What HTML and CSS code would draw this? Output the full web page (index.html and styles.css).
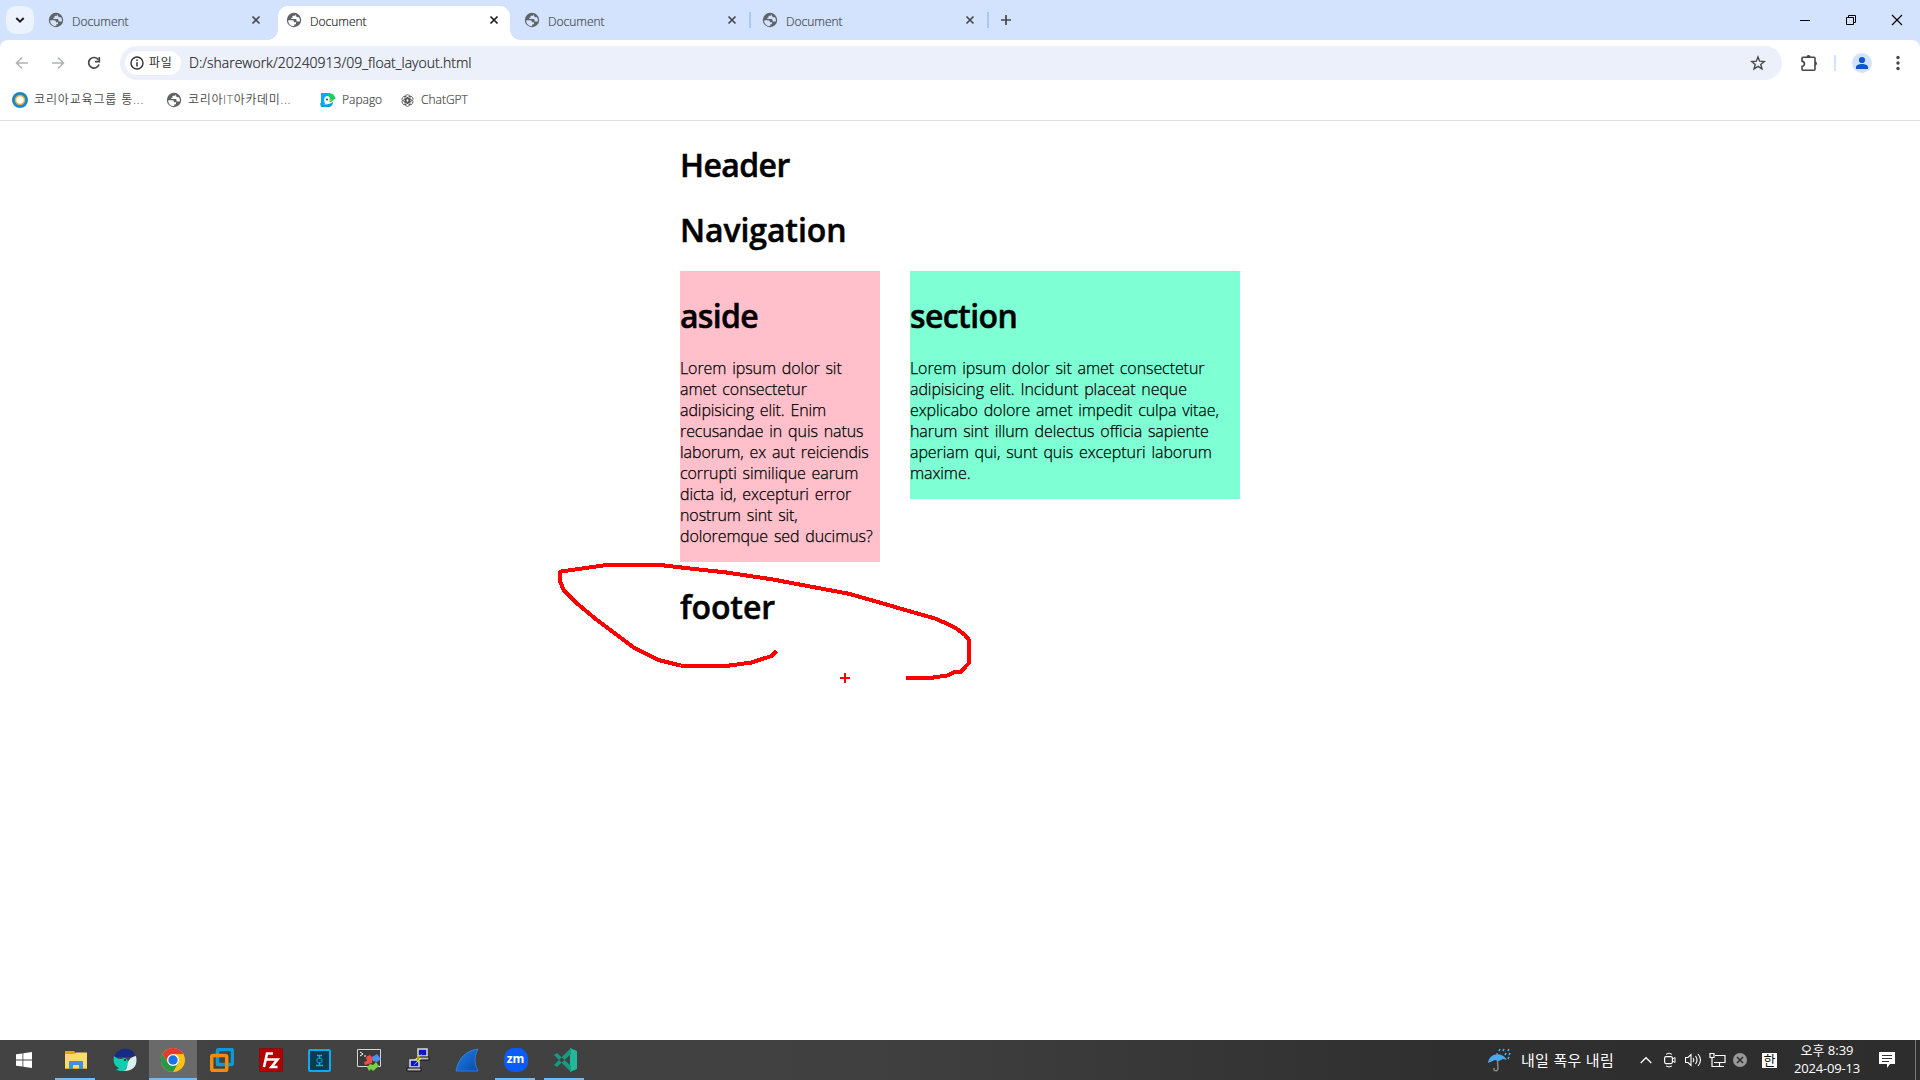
FILE: index.html
```
<!DOCTYPE html>
<html lang="ko">
<head>
<meta charset="utf-8">
<title>Document</title>
<link rel="stylesheet" href="styles.css">
</head>
<body>
<svg class="defs" aria-hidden="true">
  <symbol id="site" viewBox="0 0 16 16">
    <circle cx="8" cy="8" r="7.200" fill="#5f6368"/>
    <path d="M2.200 8.300h4.300q1.500.2 1.500 1.900h2v2H8.300v1.900C5 14.300 2 12 2.200 8.300z" fill="currentColor"/>
    <path d="M9.200 2.200v1.500H7.300q-.8 0-.8.800v1.300H5.300v1.300h4.200q1 0 1.100 1.300v1h2.200q.9.200 1.100-.5.200-2-.9-3.600h-1.500q-1.200 0-1.200-1.200z" fill="currentColor"/>
  </symbol>
  <symbol id="close" viewBox="0 0 10 10"><path d="M1.500 1.500l7 7m0-7l-7 7" stroke="currentColor" stroke-width="1.700" fill="none"/></symbol>
</svg>

<div class="screen">
  <div class="tabstrip">
    <button class="search"><svg width="10" height="8" viewBox="0 0 10 8"><path d="M1.300 2l3.700 3.600L8.700 2" fill="none" stroke="#1f1f1f" stroke-width="2"/></svg></button>
    <div class="tabs">
      <div class="tab"><svg class="fav"><use href="#site"/></svg><span>Document</span><svg class="x"><use href="#close"/></svg></div>
      <div class="tab active"><svg class="fav"><use href="#site"/></svg><span>Document</span><svg class="x"><use href="#close"/></svg></div>
      <div class="tab"><svg class="fav"><use href="#site"/></svg><span>Document</span><svg class="x"><use href="#close"/></svg><i class="sep"></i></div>
      <div class="tab"><svg class="fav"><use href="#site"/></svg><span>Document</span><svg class="x"><use href="#close"/></svg><i class="sep"></i></div>
    </div>
    <svg class="plus" width="12" height="12" viewBox="0 0 12 12"><path d="M6 1v10M1 6h10" stroke="#474747" stroke-width="1.700"/></svg>
    <div class="wincontrols">
      <svg width="46" height="40" viewBox="0 0 46 40"><path d="M18 20.500h10" stroke="#000"/></svg>
      <svg width="46" height="40" viewBox="0 0 46 40"><path d="M18.500 17.500h7v7h-7zM20.500 17.500v-2h7v7h-2" fill="none" stroke="#000"/></svg>
      <svg width="46" height="40" viewBox="0 0 46 40"><path d="M18 15l10 10m0-10L18 25" stroke="#000" stroke-width="1.200"/></svg>
    </div>
  </div>

  <div class="toolbar">
    <svg class="nav" width="14" height="14" viewBox="0 0 14 14"><path d="M13 7H2M7 1.500L1.500 7 7 12.500" fill="none" stroke="#b0b2b5" stroke-width="1.600"/></svg>
    <svg class="nav" width="14" height="14" viewBox="0 0 14 14"><path d="M1 7h11M7 1.500L12.500 7 7 12.500" fill="none" stroke="#b0b2b5" stroke-width="1.600"/></svg>
    <svg class="nav reload" width="14" height="14" viewBox="0 0 14 14"><path d="M11.300 3.700A5.300 5.300 0 1 0 12 8.500" fill="none" stroke="#474747" stroke-width="1.700"/><path d="M12.300 1v4.700H8" fill="none" stroke="#474747" stroke-width="1.700"/></svg>
    <div class="omnibox">
      <div class="chip"><svg width="14" height="14" viewBox="0 0 14 14"><circle cx="7" cy="7" r="6" fill="none" stroke="#303030" stroke-width="1.400"/><path d="M7 6.200v4.200M7 3.500v1.500" stroke="#303030" stroke-width="1.500"/></svg><span>파일</span></div>
      <span class="url">D:/sharework/20240913/09_float_layout.html</span>
      <svg class="star" width="16" height="16" viewBox="0 0 16 16"><path d="M8 1.900l1.700 4.300 4.600.3-3.500 2.900 1.200 4.500L8 11.400l-4 2.500 1.200-4.500L1.700 6.500l4.600-.3z" fill="none" stroke="#474747" stroke-width="1.400"/></svg>
    </div>
    <svg class="puzzle" width="18" height="18" viewBox="0 0 18 18"><path d="M2 4.200Q2 3.200 3 3.200h11q1 0 1 1v11q0 1-1 1H3q-1 0-1-1v-2.700c3.300-.7 3.300-4.700 0-5.400z" fill="none" stroke="#474747" stroke-width="1.600"/><path d="M6.500 3a2 2 0 0 1 4 0zM15 7.500a2 2 0 0 1 0 4z" fill="#474747"/></svg>
    <i class="divider"></i>
    <svg class="avatar" width="20" height="20" viewBox="0 0 20 20"><circle cx="10" cy="10" r="10" fill="#d3e3fd"/><circle cx="10" cy="7" r="3.100" fill="#0b57d0"/><path d="M4 16v-1.500c0-2.600 3-3.500 6-3.500s6 .9 6 3.500V16z" fill="#0b57d0"/></svg>
    <svg class="dots" width="4" height="16" viewBox="0 0 4 16"><g fill="#474747"><circle cx="2" cy="2.500" r="1.700"/><circle cx="2" cy="8" r="1.700"/><circle cx="2" cy="13.500" r="1.700"/></g></svg>
  </div>

  <div class="bookmarks">
    <div class="bm b1"><svg width="16" height="16" viewBox="0 0 16 16"><circle cx="8" cy="8" r="8" fill="#138bcb"/><circle cx="8" cy="8" r="4.500" fill="#fff" stroke="#f4a72c" stroke-width="1.500"/></svg><span class="kr">코리아교육그룹 통...</span></div>
    <div class="bm b2"><svg width="16" height="16"><use href="#site"/></svg><span class="kr kr2">코리아IT아카데미...</span></div>
    <div class="bm b3"><svg width="16" height="16" viewBox="0 0 16 16"><path d="M1 1h8v6l-2 5H1z" fill="#08a8f5"/><path d="M8 1c4 0 7 2 7.500 6H9z" fill="#18ce62"/><path d="M4 8c0-5 6-5 6-1l-1 5H5z" fill="#fff"/><path d="M9.500 6.500H15L11 10H9z" fill="#18ce62"/><path d="M9 7.500h3L9 10z" fill="#ffd225"/><path d="M0 11c4 2 9 2 13-1 0 3-2 5-5 5H1z" fill="#0a9dec"/><circle cx="7" cy="7.500" r="1" fill="#174268"/></svg><span>Papago</span></div>
    <div class="bm b4"><svg width="13" height="13" viewBox="0 0 13 13"><g fill="none" stroke="#4a4a4a" stroke-width=".8"><rect id="petal" x="4" y=".7" width="5" height="7.500" rx="2.400"/><use href="#petal" transform="rotate(60 6.500 6.500)"/><use href="#petal" transform="rotate(120 6.500 6.500)"/><use href="#petal" transform="rotate(180 6.500 6.500)"/><use href="#petal" transform="rotate(240 6.500 6.500)"/><use href="#petal" transform="rotate(300 6.500 6.500)"/></g></svg><span>ChatGPT</span></div>
  </div>

  <main class="page">
    <div class="container">
      <h1><span>Header</span></h1>
      <h1 class="wide"><span>Navigation</span></h1>
      <div class="columns">
        <aside>
          <h1 class="tight"><span>aside</span></h1>
          <p>Lorem ipsum dolor sit<br>amet consectetur<br>adipisicing elit. Enim<br>recusandae in quis natus<br>laborum, ex aut reiciendis<br>corrupti similique earum<br>dicta id, excepturi error<br>nostrum sint sit,<br>doloremque sed ducimus?</p>
        </aside>
        <section>
          <h1><span>section</span></h1>
          <p>Lorem ipsum dolor sit amet consectetur<br>adipisicing elit. Incidunt placeat neque<br>explicabo dolore amet impedit culpa vitae,<br>harum sint illum delectus officia sapiente<br>aperiam qui, sunt quis excepturi laborum<br>maxime.</p>
        </section>
      </div>
      <h1 class="wide"><span>footer</span></h1>
    </div>
    <svg class="ink" width="420" height="124" viewBox="555 560 420 124" shape-rendering="crispEdges">
      <path d="M906 677.500h27.500l13.500-2 7.500-3.500h6l8.500-9V640l-4-5-10-7.500-18.500-8.500-86.500-25-77-14.500-46.500-7-36.500-4-30-3.500h-53.500L561 571.500l-1 1v9l4 9 12.500 12.500L597 620l36 27 25.500 13 22 5.500h49l22-3 20-6.500 5-5" fill="none" stroke="#f00" stroke-width="4" stroke-linejoin="round"/>
      <path d="M840 678h10M845 673v10" stroke="#f00" stroke-width="2"/>
    </svg>
  </main>

  <footer class="taskbar">
    <div class="apps">
      <div class="app"><svg width="16" height="16" viewBox="0 0 16 16"><path d="M0 2.300L6.500 1.400v6.200H0zM7.300 1.200L16 0v7.600H7.300zM0 8.400h6.500v6.200L0 13.700zM7.300 8.400H16V16l-8.700-1.200z" fill="#fff"/></svg></div>
      <div class="app open"><svg width="22" height="18" viewBox="0 0 22 18"><path d="M0 0h9l1.500 2H22v16H0z" fill="#e6a60c"/><path d="M0 3h9l2-1.500h11V17H0z" fill="#ffda6b"/><path d="M4 18V11q0-1 1-1h12q1 0 1 1v7h-4v-4H8v4z" fill="#3b94d9"/></svg></div>
      <div class="app"><svg width="24" height="24" viewBox="0 0 24 24"><path d="M1 9C3 3 9 0 14 1c5 0 8 4 8 8z" fill="#172b85"/><path d="M1 8c3 3 7 4 10 2 4 0 4 4 4 6l-3 7c-3 0-6 0-9-1l3-2C1 18 0 13 1 8z" fill="#10cdb2"/><path d="M11 23c6-2 0-13 12-15 2 9-2 15-12 15z" fill="#d9f0ee"/><circle cx="12" cy="12" r="1" fill="#113"/></svg></div>
      <div class="app open current"><svg width="24" height="24" viewBox="0 0 24 24"><circle cx="12" cy="12" r="12" fill="#fbc116"/><path d="M1.600 6A12 12 0 0 1 22.400 6H12v6L6.800 15z" fill="#e33b2e"/><path d="M1.600 6A12 12 0 0 0 12 24l5.200-9-5.200-3-5.200 3z" fill="#269a48"/><circle cx="12" cy="12" r="6" fill="#fff"/><circle cx="12" cy="12" r="4.700" fill="#1a73e8"/></svg></div>
      <div class="app"><svg width="24" height="24" viewBox="0 0 24 24"><rect x="7.500" y="1.500" width="15" height="15" rx="1.500" fill="none" stroke="#079bd9" stroke-width="3.500"/><rect x="1.700" y="7.500" width="15" height="15" rx="1.500" fill="none" stroke="#f58b08" stroke-width="3.500"/><path d="M7.500 10v6.500H12" fill="none" stroke="#079bd9" stroke-width="3"/></svg></div>
      <div class="app"><svg width="24" height="24" viewBox="0 0 24 24"><path d="M.5.500h23v23H.5z" fill="#b40000" stroke="#8a0000" stroke-dasharray="1 1"/><path d="M5 19L8 5.500h6M6.500 11.500H12M12 11.500h6.500L12.500 19h6" fill="none" stroke="#fff" stroke-width="2.600"/></svg></div>
      <div class="app"><svg width="23" height="23" viewBox="0 0 23 23"><rect x="1" y="1" width="21" height="21" rx="1" fill="#073b50" stroke="#00aef5" stroke-width="2"/><path d="M9 6.500h5M11.500 7v2M8 16.500h7M11.500 14v2" stroke="#00aef5" stroke-width="1.300"/><rect x="9" y="9.300" width="5" height="4.400" rx="1.500" fill="none" stroke="#00aef5"/></svg></div>
      <div class="app"><svg width="24" height="24" viewBox="0 0 24 24"><path d="M.5 1.500h23v17H.5z" fill="#393939" stroke="#d7d7d7"/><path d="M3 4l3 2-3 2M7 8h2" fill="none" stroke="#fff"/><path d="M9 9l4-2 3 3-1 5-7 2-1-3 3-1z" fill="#f04c46"/><path d="M15 9l5-3 4 5-4 3-4-1z" fill="#4b8ff5"/><path d="M10 19l3-3 3 1 3-3 3 4-6 5-2-2-2 2z" fill="#79ce43"/></svg></div>
      <div class="app"><svg width="24" height="24" viewBox="0 0 24 24"><path d="M12 1h9v7h-9zM4 12h9v7H4z" fill="#0718cc" stroke="#ddd" stroke-width="1.500"/><path d="M12 9h11v3H12zM1 20h14v3H1z" fill="#bbb" stroke="#111"/><path d="M17 5l-9 7 5-1-6 7 9-8-5 1z" fill="#ff0"/></svg></div>
      <div class="app"><svg width="24" height="24" viewBox="0 0 24 24"><defs><linearGradient id="fin" y2="1"><stop stop-color="#237fe9"/><stop offset="1" stop-color="#064bae"/></linearGradient></defs><path d="M1 23C3 10 12 2 23 1c-4 8-4 14 0 22z" fill="url(#fin)" stroke="#3b8beb" stroke-width=".7"/></svg></div>
      <div class="app open"><span class="zoom">zm</span></div>
      <div class="app open"><svg width="24" height="24" viewBox="0 0 24 24"><path d="M17 0l7 3v18l-7 3z" fill="#22b99a"/><path d="M1 7l3-2 14 13v6zM1 17l3 2L18 6V0z" fill="#169b83"/></svg></div>
    </div>
    <div class="tray">
      <svg class="weather" width="24" height="24" viewBox="0 0 24 24"><path d="M9 5l1 16q-1 3-4 1v-2" fill="none" stroke="#888" stroke-width="1.500"/><path d="M0 15C1 5 14 3 19 12l-4-1-4 2-4-1z" fill="#49a9ee"/><path d="M12 1l-1 2m5-2l-1 2m6-2l-1 2m-2 2l-1 2m5-2l-1 2m0 2l-1 2" stroke="#55b6f4" stroke-width="1.500"/></svg>
      <span class="forecast">내일 폭우 내림</span>
      <svg class="t-up" width="12" height="8" viewBox="0 0 12 8"><path d="M.7 7L6 1.700 11.300 7" fill="none" stroke="#fff" stroke-width="1.300"/></svg>
      <svg class="t-cam" width="12" height="16" viewBox="0 0 12 16"><rect x=".6" y="4.600" width="7.800" height="7" rx="1.500" fill="none" stroke="#fff" stroke-width="1.200"/><path d="M8.500 7L11 5.500v5L8.500 9M2 2.300Q5 0 8 2.300M2 14q3 2 6 0" fill="none" stroke="#fff"/></svg>
      <svg class="t-vol" width="17" height="14" viewBox="0 0 17 14"><path d="M.5 4.500H3l3-3v11l-3-3H.5zM8 5q1.500 2 0 4M10.500 3q3 4 0 8M13 1q5 6 0 12" fill="none" stroke="#fff" stroke-width="1.100"/></svg>
      <svg class="t-net" width="17" height="14" viewBox="0 0 17 14"><path d="M6 2.500h10v7H5M10.500 10v3M7 13.500h8M1 .500h4v4H1zM3 5v8.500h4" fill="none" stroke="#fff" stroke-width="1.200"/></svg>
      <svg class="t-off" width="14" height="14" viewBox="0 0 14 14"><circle cx="7" cy="7" r="7" fill="#999"/><path d="M4 4l6 6m0-6l-6 6" stroke="#303030" stroke-width="1.600"/></svg>
      <span class="ime">한</span>
      <div class="clock"><span>오후 8:39</span><span class="date">2024-09-13</span></div>
      <svg class="note" width="16" height="16" viewBox="0 0 16 16"><path d="M0 0h16v12h-5l-3 4v-4H0z" fill="#fff"/><path d="M3 3.500h10M3 6.500h10M3 9.500h7" stroke="#333"/></svg>
      <i class="desk"></i>
    </div>
  </footer>
</div>
</body>
</html>
```
FILE: styles.css
```
* { box-sizing: border-box; }
body { margin: 0; background: #fff; color: #000; font-family: "Open Sans", "Noto Sans CJK KR", sans-serif; overflow: hidden; }
svg { display: block; flex: none; }
.defs { display: none; }
.screen { display: flex; flex-direction: column; width: 1920px; height: 1080px; }

.tabstrip { display: flex; align-items: center; height: 48px; margin-bottom: -8px; padding-bottom: 8px; padding-left: 6px; background: #d3e3fd; flex: none; }
.search { display: grid; place-items: center; width: 28px; height: 28px; padding: 0; border: 0; border-radius: 10px; background: #ecf3fe; }
.tabs { display: flex; align-self: stretch; margin-left: 6px; }
.tab { position: relative; display: flex; align-items: center; width: 238px; height: 40px; padding-left: 8px; color: #45494e; font-size: 12px; font-weight: 300; -webkit-text-stroke: .2px; }
.fav { width: 16px; height: 16px; color: #d3e3fd; }
.tab span { margin: 2px 0 0 8px; width: 124px; }
.x { width: 10px; height: 10px; margin-left: 55px; color: #45494e; }
.active { color: #1f1f1f; }
.active::before { content: ""; position: absolute; z-index: 0; left: 0; top: 6px; width: 232px; height: 34px; border-radius: 10px 10px 0 0; background: #fff; }
.active::after { content: ""; position: absolute; left: -10px; top: 30px; width: 252px; height: 10px; background: radial-gradient(circle at 0 0, transparent 9.500px, #fff 10px) left / 10px 10px no-repeat, radial-gradient(circle at 100% 0, transparent 9.500px, #fff 10px) right / 10px 10px no-repeat; }
.active > * { position: relative; z-index: 1; }
.active .fav { color: #fff; }
.active .x { color: #1f1f1f; }
.sep { position: absolute; right: 3px; top: 12px; width: 2px; height: 16px; background: #a8c7fa; }
.plus { margin-left: 8px; }
.wincontrols { display: flex; margin-left: auto; }

.toolbar { display: flex; align-items: center; position: relative; height: 46px; padding-left: 15px; background: #fff; border-radius: 8px 8px 0 0; flex: none; }
.nav { margin-right: 22px; }
.reload { margin-right: 19px; }
.omnibox { display: flex; align-items: center; width: 1662px; height: 34px; padding: 0 16px 0 5px; border-radius: 17px; background: #ebf0fa; }
.chip { display: flex; align-items: center; gap: 5px; width: 56px; height: 24px; padding-left: 5px; border-radius: 12px; background: #fff; font-size: 12px; color: #303030; }
.chip span { margin-bottom: 2px; letter-spacing: .6px; white-space: nowrap; }
.url { margin: 0 0 2px 8px; font-size: 14px; font-weight: 300; -webkit-text-stroke: .2px; color: #1f1f1f; }
.star { margin-left: auto; }
.puzzle { margin-left: 18px; }
.divider { width: 2px; height: 16px; margin-left: 16px; background: #d3e3fd; }
.avatar { margin-left: 16px; }
.dots { margin-left: 24px; }

.bookmarks { display: flex; align-items: center; height: 35px; padding-left: 12px; border-bottom: 1px solid #dfe0e1; flex: none; padding-bottom: 6px; }
.bm { display: flex; align-items: center; gap: 7px; font-size: 12px; font-weight: 300; -webkit-text-stroke: .2px; color: #474747; white-space: nowrap; }
.bm span { margin: 0 0 2px -1px; }
.b4 span { margin-left: 0; }
.bm svg { color: #fff; }
.b1 { width: 154px; }
.b2 { width: 154px; }
.b3 { width: 81px; }
.kr { letter-spacing: .85px; font-weight: 350; -webkit-text-stroke: 0; }
.kr2 { letter-spacing: .65px; }

.page { position: relative; flex: 1; min-height: 0; }
.container { width: 560px; margin: 0 auto; display: flow-root; }
h1 { margin: 21.440px 0; padding-top: 1px; font-size: 32px; line-height: 42px; font-weight: 600; letter-spacing: -.600px; -webkit-text-stroke: .5px; }
h1 span { display: block; height: 42px; line-height: 43.500px; }
.wide { letter-spacing: -.1px; }
.tight { letter-spacing: -.700px; }
.columns { display: flex; align-items: flex-start; justify-content: space-between; }
aside { width: 200px; background: pink; display: flow-root; }
section { width: 330px; background: aquamarine; display: flow-root; }
p { margin: 0 0 15px; padding-top: 1px; font-size: 16px; line-height: 21px; font-weight: 300; -webkit-text-stroke: .25px; letter-spacing: -.08px; word-spacing: 1.800px; white-space: nowrap; }
.ink { position: absolute; left: 555px; top: 439px; }

.taskbar { display: flex; height: 40px; flex: none; background: linear-gradient(90deg, #434343, #404040 45%, #2f2f2f 75%, #2d2d2d); color: #fff; }
.apps { display: flex; }
.app { position: relative; display: grid; place-items: center; width: 49px; height: 40px; }
.app:first-child { width: 51px; padding-right: 3px; }
.open::after { content: ""; position: absolute; left: 4px; bottom: 0; width: 40px; height: 2px; background: #76b9ed; }
.current { width: 48px; background: #6a6a6a; }
.current::after { left: 0; width: 48px; }
.zoom { width: 24px; height: 24px; border-radius: 10px; background: #0b5cff; font: 700 12px/22px "Open Sans", sans-serif; text-align: center; }
.tray { display: flex; align-items: center; margin-left: auto; width: 432px; }
.forecast { width: 119px; margin: 0 0 2px 9px; font-size: 15px; letter-spacing: .3px; white-space: nowrap; }
.t-cam { margin-left: 12px; }
.t-vol { margin-left: 9px; }
.t-net { margin-left: 7px; }
.t-off { margin-left: 7px; }
.ime { width: 15px; height: 15px; margin-left: 15px; background: #fff; color: #111; font-size: 13px; line-height: 14px; text-align: center; }
.clock { display: flex; flex-direction: column; align-items: center; width: 70px; margin: 0 0 2px 15px; font-size: 13px; line-height: 18px; white-space: nowrap; }
.date { letter-spacing: -.2px; }
.note { margin-left: 17px; }
.desk { width: 1px; height: 40px; margin-left: auto; margin-right: 4px; background: #777; }
```
